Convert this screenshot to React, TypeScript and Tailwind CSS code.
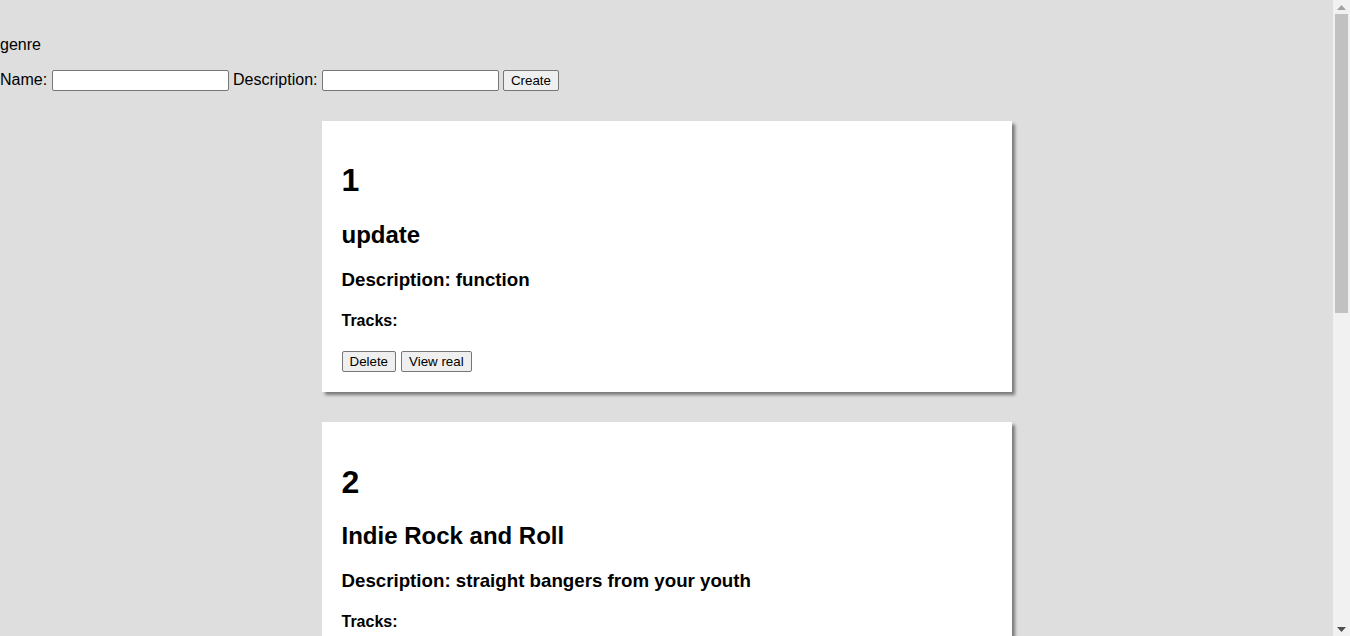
import React from "react";

const cards = [
  { id: 1, name: "update", desc: "function" },
  { id: 2, name: "Indie Rock and Roll", desc: "straight bangers from your youth" },
  { id: 3, name: "Jazz", desc: "smooth and cool" },
  { id: 4, name: "Hip Hop", desc: "beats and rhymes" },
];

const btn =
  "bg-[#efefef] border border-[#767676] rounded-[2px] px-[7px] py-[1px] text-[13.33px] leading-[17px] text-black align-middle";

function Card({ id, name, desc }: { id: number; name: string; desc: string }) {
  return (
    <div className="w-[690px] mx-auto my-[30px] bg-white p-[20px] shadow-[3px_3px_3px_#7a7a7a] flow-root">
      <h1 className="text-[32px] font-bold leading-[normal] my-[21.44px]">{id}</h1>
      <h2 className="text-[24px] font-bold leading-[normal] my-[19.92px]">{name}</h2>
      <h3 className="text-[18.72px] font-bold leading-[normal] my-[18.72px]">Description: {desc}</h3>
      <h4 className="text-[16px] font-bold leading-[normal] my-[21.28px]">Tracks:</h4>
      <div className="flex gap-[5px]">
        <button className={btn}>Delete</button>
        <button className={btn}>View real</button>
      </div>
    </div>
  );
}

function Scrollbar() {
  return (
    <div className="w-[17px] h-[636px] bg-[#f1f1f1] flex flex-col items-center shrink-0">
      <div className="h-[14px] flex items-center justify-center">
        <svg width="9" height="5" viewBox="0 0 9 5">
          <polygon points="4.5,0 9,5 0,5" fill="#a3a3a3" />
        </svg>
      </div>
      <div className="w-[13px] h-[299px] bg-[#c1c1c1]" />
      <div className="flex-1" />
      <div className="h-[14px] flex items-center justify-center">
        <svg width="9" height="5" viewBox="0 0 9 5">
          <polygon points="0,0 9,0 4.5,5" fill="#505050" />
        </svg>
      </div>
    </div>
  );
}

export default function App() {
  return (
    <div className="flex h-[636px] overflow-hidden bg-[#dedede] text-black font-['Liberation_Sans',Arial,sans-serif] text-[16px] leading-[normal]">
      <div className="flex-1 h-[636px] overflow-hidden flow-root">
        <div className="mt-[36px]">genre</div>
        <div className="mt-[15px] flex items-center h-[22px] whitespace-pre">
          <span>Name: </span>
          <input className="w-[177px] h-[21px] border border-[#767676] rounded-[2px] bg-white text-[13.33px] px-[2px]" />
          <span> Description: </span>
          <input className="w-[177px] h-[21px] border border-[#767676] rounded-[2px] bg-white text-[13.33px] px-[2px]" />
          <span className="w-[4px]" />
          <button className={btn + " h-[21px]"}>Create</button>
        </div>
        {cards.map((c) => (
          <Card key={c.id} {...c} />
        ))}
      </div>
      <Scrollbar />
    </div>
  );
}
